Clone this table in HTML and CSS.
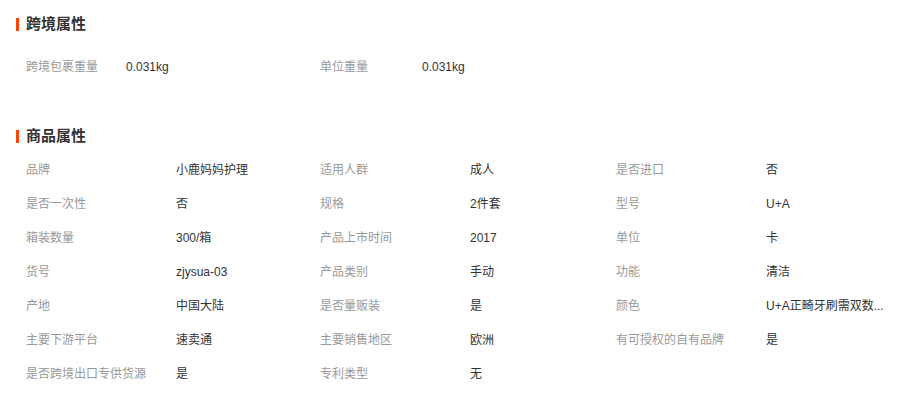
FILE: index.html
```html
<!DOCTYPE html>
<html lang="zh-CN">
<head>
<meta charset="utf-8">
<link rel="stylesheet" href="styles.css">
</head>
<body>
<div class="page">
  <section class="section section-cross">
    <h2 class="title">跨境属性</h2>
    <ul class="attrs attrs-cross">
      <li class="attr"><span class="label">跨境包裹重量</span><span class="value">0.031kg</span></li>
      <li class="attr attr-second"><span class="label">单位重量</span><span class="value">0.031kg</span></li>
    </ul>
  </section>
  <section class="section section-goods">
    <h2 class="title">商品属性</h2>
    <ul class="attrs attrs-goods">
      <li class="attr"><span class="label">品牌</span><span class="value">小鹿妈妈护理</span></li>
      <li class="attr"><span class="label">适用人群</span><span class="value">成人</span></li>
      <li class="attr"><span class="label">是否进口</span><span class="value">否</span></li>
      <li class="attr"><span class="label">是否一次性</span><span class="value">否</span></li>
      <li class="attr"><span class="label">规格</span><span class="value">2件套</span></li>
      <li class="attr"><span class="label">型号</span><span class="value">U+A</span></li>
      <li class="attr"><span class="label">箱装数量</span><span class="value">300/箱</span></li>
      <li class="attr"><span class="label">产品上市时间</span><span class="value">2017</span></li>
      <li class="attr"><span class="label">单位</span><span class="value">卡</span></li>
      <li class="attr"><span class="label">货号</span><span class="value">zjysua-03</span></li>
      <li class="attr"><span class="label">产品类别</span><span class="value">手动</span></li>
      <li class="attr"><span class="label">功能</span><span class="value">清洁</span></li>
      <li class="attr"><span class="label">产地</span><span class="value">中国大陆</span></li>
      <li class="attr"><span class="label">是否量贩装</span><span class="value">是</span></li>
      <li class="attr"><span class="label">颜色</span><span class="value" title="U+A正畸牙刷需双数请拍2支">U+A正畸牙刷需双数...</span></li>
      <li class="attr"><span class="label">主要下游平台</span><span class="value">速卖通</span></li>
      <li class="attr"><span class="label">主要销售地区</span><span class="value">欧洲</span></li>
      <li class="attr"><span class="label">有可授权的自有品牌</span><span class="value">是</span></li>
      <li class="attr"><span class="label">是否跨境出口专供货源</span><span class="value">是</span></li>
      <li class="attr"><span class="label">专利类型</span><span class="value">无</span></li>
    </ul>
  </section>
</div>
</body>
</html>
```
FILE: styles.css
```css
* { box-sizing: border-box; }
html, body { margin: 0; padding: 0; background: #fff; }
body {
  font-family: "Liberation Sans", "Noto Sans CJK SC", sans-serif;
  font-size: 12px;
  color: #333;
}
.page { padding: 14px 0 0 16px; width: 904px; }
.section-goods { margin-top: 42px; }
.title {
  margin: 0;
  height: 20px;
  line-height: 20px;
  font-size: 15px;
  font-weight: bold;
  color: #333;
  display: flex;
  align-items: center;
  gap: 7px;
}
.title::before {
  content: "";
  display: block;
  width: 3px;
  height: 13px;
  background: #ff4400;
}
.attrs {
  list-style: none;
  margin: 0;
  padding: 0 0 0 10px;
  display: grid;
  grid-template-columns: 294px 296px 1fr;
}
.attrs-cross { margin-top: 16px; }
.attrs-goods { margin-top: 7px; }
.attr {
  display: flex;
  height: 34px;
  line-height: 34px;
  white-space: nowrap;
}
.label { color: #999; width: 150px; flex: none; }
.attrs-cross .label { width: 100px; }
.attrs-cross .attr-second .label { width: 102px; }
.value {
  color: #333;
  white-space: nowrap;
}
```
